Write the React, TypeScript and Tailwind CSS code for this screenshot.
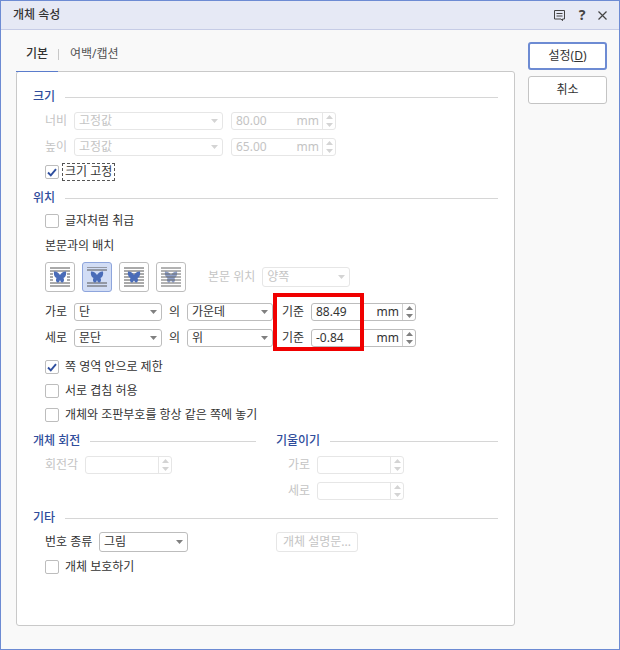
function Arrow({ disabled }: { disabled?: boolean }) {
  return (
    <svg width="7" height="4" viewBox="0 0 7 4" className="shrink-0">
      <path d="M0 0h7L3.5 4z" fill={disabled ? '#d4d4d4' : '#808080'} />
    </svg>
  )
}

function Select({ value, width, disabled }: { value: string; width: string; disabled?: boolean }) {
  return (
    <div
      className={`flex h-full items-center justify-between rounded-[3px] border bg-white pl-[4px] pr-[4px] ${width} ${
        disabled ? 'border-[#e6e6e6] text-[#c4c4c4]' : 'border-[#bdbdbd] text-[#333]'
      }`}
    >
      <span>{value}</span>
      <Arrow disabled={disabled} />
    </div>
  )
}

function Spin({
  value,
  unit,
  width,
  disabled,
}: {
  value?: string
  unit?: string
  width: string
  disabled?: boolean
}) {
  const arrow = disabled ? '#d4d4d4' : '#808080'
  return (
    <div
      className={`flex h-full items-stretch rounded-[3px] border bg-white ${width} ${
        disabled ? 'border-[#e6e6e6] text-[#c4c4c4]' : 'border-[#bdbdbd] text-[#333]'
      }`}
    >
      <div className="flex flex-1 items-center justify-between pl-[4px] pr-[3px]">
        <span>{value}</span>
        <span>{unit}</span>
      </div>
      <div
        className={`flex w-[13px] flex-col items-center justify-center gap-[4px] border-l ${
          disabled ? 'border-[#e6e6e6]' : 'border-[#d0d0d0]'
        }`}
      >
        <svg width="7" height="4" viewBox="0 0 7 4">
          <path d="M0 4h7L3.5 0z" fill={arrow} />
        </svg>
        <svg width="7" height="4" viewBox="0 0 7 4">
          <path d="M0 0h7L3.5 4z" fill={arrow} />
        </svg>
      </div>
    </div>
  )
}

function Check({ label, checked, focus, className }: { label: string; checked?: boolean; focus?: boolean; className: string }) {
  return (
    <div className={`flex h-[16px] items-center pl-[12px] text-[#333] ${className}`}>
      <div className="flex h-[14px] w-[14px] items-center justify-center rounded-[2px] border border-[#bdbdbd] bg-white">
        {checked && (
          <svg width="10" height="9" viewBox="0 0 10 9">
            <path d="M1 4.5 L3.8 7.4 L9 1.2" fill="none" stroke="#2f4f9f" strokeWidth="1.9" />
          </svg>
        )}
      </div>
      <span className={focus ? 'ml-[3px] border border-dashed border-[#555] px-[2px] leading-[16px]' : 'ml-[6px]'}>
        {label}
      </span>
    </div>
  )
}

function Heading({ label, className }: { label: string; className?: string }) {
  return (
    <div className={`flex h-[16px] items-center gap-[10px] ${className ?? ''}`}>
      <span className="font-medium text-[#2f4d9c]">{label}</span>
      <div className="h-px flex-1 bg-[#d6d6d6]" />
    </div>
  )
}

const wrapLines = {
  square: ['M0 1h20', 'M0 4h20', 'M0 7h3', 'M17 7h3', 'M0 10h3', 'M17 10h3', 'M0 13h3', 'M17 13h3', 'M0 16h20', 'M0 19h20'],
  topBottom: ['M0 0h20', 'M0 3h20', 'M0 16h20', 'M0 19h20'],
  full: ['M0 1h20', 'M0 4h20', 'M0 7h20', 'M0 10h20', 'M0 13h20', 'M0 16h20', 'M0 19h20'],
}

function WrapButton({ kind, active }: { kind: 'square' | 'topBottom' | 'front' | 'behind'; active?: boolean }) {
  const lines = kind === 'square' ? wrapLines.square : kind === 'topBottom' ? wrapLines.topBottom : wrapLines.full
  const butterfly = (
    <path
      d="M4 4.5C6 4 9 6 10 8C11 6 14 4 16 4.5C16.5 7 16 10 13.5 11C14.5 13 14 15.5 12 15.5C11 15.5 10.3 14 10 13C9.7 14 9 15.5 8 15.5C6 15.5 5.5 13 6.5 11C4 10 3.5 7 4 4.5Z"
      fill={kind === 'behind' ? '#8d9fc9' : '#4a6cb8'}
    />
  )
  return (
    <div
      className={`flex h-[30px] w-[30px] items-center justify-center rounded-[3px] border ${
        active ? 'border-[#8ea5dc] bg-[#d2ddf5]' : 'border-[#bdbdbd] bg-white'
      }`}
    >
      <svg width="20" height="20" viewBox="0 0 20 20">
        {kind === 'behind' && butterfly}
        {lines.map((d) => (
          <path key={d} d={d} stroke={kind === 'behind' ? '#666' : '#555'} strokeWidth="1" />
        ))}
        {kind !== 'behind' && butterfly}
      </svg>
    </div>
  )
}

export default function App() {
  return (
    <div className="relative flex h-[650px] w-[620px] flex-col border border-[#6d8bd3] bg-[#f9f9f9] text-[12px] leading-[16px] [font-family:'Noto_Sans','Noto_Sans_CJK_KR',sans-serif]">
      {/* title bar */}
      <div className="flex h-[29px] shrink-0 items-center justify-between border-b border-[#c6cce6] bg-[#e6e9f5] pl-[12px] pr-[12px]">
        <span className="font-medium text-[#333]">개체 속성</span>
        <div className="flex items-center gap-[11px] text-[#444]">
          <svg width="13" height="13" viewBox="0 0 13 13" fill="none" stroke="#444" strokeWidth="1">
            <path d="M1.5 1.5h10v8.5h-2v1.7L8 10H1.5z" />
            <path d="M3.5 4.5h6M3.5 7h6" />
          </svg>
          <span className="w-[10px] text-center text-[14px] font-bold leading-none">?</span>
          <svg width="9" height="9" viewBox="0 0 9 9" stroke="#444" strokeWidth="1.2">
            <path d="M.5.5l8 8M8.5.5l-8 8" />
          </svg>
        </div>
      </div>

      <div className="flex flex-1 pl-[15px] pr-[12px]">
        {/* left column */}
        <div className="w-[499px]">
          <div className="mt-[15px] flex h-[27px] items-start">
            <div className="flex h-full w-[42px] justify-center border-b border-[#5b7ccc] pt-[1px] font-medium text-[#333]">
              기본
            </div>
            <div className="mt-[4px] h-[11px] w-px bg-[#c8c8c8]" />
            <div className="ml-[11px] pt-[1px] text-[#555]">여백/캡션</div>
          </div>

          <div className="-mt-px h-[555px] rounded-[3px] border border-[#c9c9c9] bg-white px-[16px] pt-[17px]">
            <Heading label="크기" />
            <div className="mt-[7px] flex h-[18px] items-center pl-[12px]">
              <span className="w-[29px] text-[#c4c4c4]">너비</span>
              <Select value="고정값" width="w-[149px]" disabled />
              <div className="ml-[8px] h-full">
                <Spin value="80.00" unit="mm" width="w-[105px]" disabled />
              </div>
            </div>
            <div className="mt-[8px] flex h-[18px] items-center pl-[12px]">
              <span className="w-[29px] text-[#c4c4c4]">높이</span>
              <Select value="고정값" width="w-[149px]" disabled />
              <div className="ml-[8px] h-full">
                <Spin value="65.00" unit="mm" width="w-[105px]" disabled />
              </div>
            </div>
            <Check label="크기 고정" checked focus className="mt-[8px]" />

            <Heading label="위치" className="mt-[10px]" />
            <Check label="글자처럼 취급" className="mt-[7px]" />
            <div className="mt-[9px] h-[16px] pl-[12px] text-[#333]">본문과의 배치</div>
            <div className="mt-[8px] flex h-[30px] items-center gap-[7px] pl-[12px]">
              <WrapButton kind="square" />
              <WrapButton kind="topBottom" active />
              <WrapButton kind="front" />
              <WrapButton kind="behind" />
              <span className="ml-[15px] text-[#c4c4c4]">본문 위치</span>
              <div className="h-[20px]">
                <Select value="양쪽" width="w-[88px]" disabled />
              </div>
            </div>
            <div className="mt-[11px] flex h-[18px] items-center pl-[12px] text-[#333]">
              <span className="w-[29px]">가로</span>
              <Select value="단" width="w-[88px]" />
              <span className="w-[25px] text-center">의</span>
              <Select value="가운데" width="w-[86px]" />
              <span className="ml-[9px] w-[29px]">기준</span>
              <Spin value="88.49" unit="mm" width="w-[105px]" />
            </div>
            <div className="mt-[8px] flex h-[18px] items-center pl-[12px] text-[#333]">
              <span className="w-[29px]">세로</span>
              <Select value="문단" width="w-[88px]" />
              <span className="w-[25px] text-center">의</span>
              <Select value="위" width="w-[86px]" />
              <span className="ml-[9px] w-[29px]">기준</span>
              <Spin value="-0.84" unit="mm" width="w-[105px]" />
            </div>
            <Check label="쪽 영역 안으로 제한" checked className="mt-[12px]" />
            <Check label="서로 겹침 허용" className="mt-[8px]" />
            <Check label="개체와 조판부호를 항상 같은 쪽에 놓기" className="mt-[8px]" />

            <div className="mt-[10px] flex gap-[20px]">
              <div className="w-[223px]">
                <Heading label="개체 회전" />
                <div className="mt-[7px] flex h-[18px] items-center pl-[12px]">
                  <span className="w-[40px] text-[#c4c4c4]">회전각</span>
                  <Spin width="w-[87px]" disabled />
                </div>
              </div>
              <div className="flex-1">
                <Heading label="기울이기" />
                <div className="mt-[7px] flex h-[18px] items-center pl-[12px]">
                  <span className="w-[29px] text-[#c4c4c4]">가로</span>
                  <Spin width="w-[87px]" disabled />
                </div>
                <div className="mt-[8px] flex h-[18px] items-center pl-[12px]">
                  <span className="w-[29px] text-[#c4c4c4]">세로</span>
                  <Spin width="w-[87px]" disabled />
                </div>
              </div>
            </div>

            <Heading label="기타" className="mt-[10px]" />
            <div className="mt-[6px] flex h-[20px] items-center pl-[12px] text-[#333]">
              <span className="w-[54px]">번호 종류</span>
              <Select value="그림" width="w-[89px]" />
              <div className="ml-[88px] flex h-full w-[82px] items-center justify-center rounded-[3px] border border-[#e6e6e6] text-[#c4c4c4]">
                개체 설명문...
              </div>
            </div>
            <Check label="개체 보호하기" className="mt-[7px]" />
          </div>
        </div>

        {/* buttons */}
        <div className="ml-[13px] mt-[12px] flex w-[79px] flex-col gap-[6px] text-[#333]">
          <div className="flex h-[28px] items-center justify-center rounded-[3px] border-2 border-[#6d8bd3] bg-white">
            <span>
              설정(<span className="underline">D</span>)
            </span>
          </div>
          <div className="flex h-[28px] items-center justify-center rounded-[3px] border border-[#c4c4c4] bg-white">
            취소
          </div>
        </div>
      </div>

      {/* red annotation around the 기준 fields */}
      <div className="pointer-events-none absolute left-[272px] top-[292px] h-[58px] w-[91px] border-4 border-[#f00000]" />
    </div>
  )
}
